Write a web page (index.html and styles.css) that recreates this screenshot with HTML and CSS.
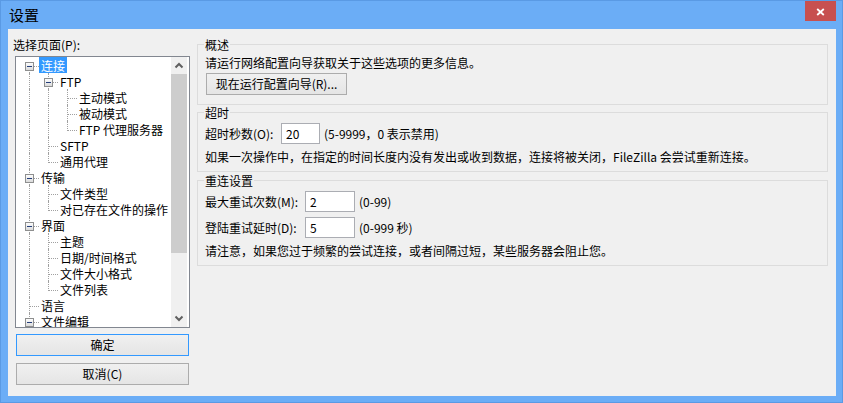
FILE: index.html
```html
<!DOCTYPE html>
<html lang="zh-CN">
<head>
    <meta charset="UTF-8">
    <meta name="viewport" content="width=device-width, initial-scale=1.0">
    <title>设置</title>
    <link rel="stylesheet" href="styles.css">
</head>
<body>
    <div class="window">
        <!-- 标题栏 -->
        <div class="titlebar">
            <span class="title">设置</span>
            <div class="close-btn">
                <svg width="9" height="8" viewBox="0 0 9 8"><path d="M1.2 1 L7.8 7 M7.8 1 L1.2 7" stroke="#fff" stroke-width="1.8" fill="none"/></svg>
            </div>
        </div>

        <div class="client">
            <!-- 左侧：页面树和按钮 -->
            <div class="sidebar">
                <div class="sidebar-label">选择页面(P):</div>
                <div class="tree">
                    <div class="tree-items">
                        <div class="tree-row"><span class="joint first"><span class="toggle"></span></span><span class="node-label selected">连接</span></div>
                        <div class="tree-row"><span class="indent line"></span><span class="joint tee"><span class="toggle"></span></span><span class="node-label">FTP</span></div>
                        <div class="tree-row"><span class="indent line"></span><span class="indent line"></span><span class="joint tee"></span><span class="node-label">主动模式</span></div>
                        <div class="tree-row"><span class="indent line"></span><span class="indent line"></span><span class="joint tee"></span><span class="node-label">被动模式</span></div>
                        <div class="tree-row"><span class="indent line"></span><span class="indent line"></span><span class="joint end"></span><span class="node-label">FTP 代理服务器</span></div>
                        <div class="tree-row"><span class="indent line"></span><span class="joint tee"></span><span class="node-label">SFTP</span></div>
                        <div class="tree-row"><span class="indent line"></span><span class="joint end"></span><span class="node-label">通用代理</span></div>
                        <div class="tree-row"><span class="joint tee"><span class="toggle"></span></span><span class="node-label">传输</span></div>
                        <div class="tree-row"><span class="indent line"></span><span class="joint tee"></span><span class="node-label">文件类型</span></div>
                        <div class="tree-row"><span class="indent line"></span><span class="joint end"></span><span class="node-label">对已存在文件的操作</span></div>
                        <div class="tree-row"><span class="joint tee"><span class="toggle"></span></span><span class="node-label">界面</span></div>
                        <div class="tree-row"><span class="indent line"></span><span class="joint tee"></span><span class="node-label">主题</span></div>
                        <div class="tree-row"><span class="indent line"></span><span class="joint tee"></span><span class="node-label">日期/时间格式</span></div>
                        <div class="tree-row"><span class="indent line"></span><span class="joint tee"></span><span class="node-label">文件大小格式</span></div>
                        <div class="tree-row"><span class="indent line"></span><span class="joint end"></span><span class="node-label">文件列表</span></div>
                        <div class="tree-row"><span class="joint tee"></span><span class="node-label">语言</span></div>
                        <div class="tree-row"><span class="joint tee"><span class="toggle"></span></span><span class="node-label">文件编辑</span></div>
                    </div>
                    <div class="scrollbar">
                        <div class="scroll-arrow">
                            <svg width="16" height="17" viewBox="0 0 16 17"><path d="M4.5 10.5 L8 7 L11.5 10.5" stroke="#606060" stroke-width="2" fill="none"/></svg>
                        </div>
                        <div class="scroll-track"><div class="scroll-thumb"></div></div>
                        <div class="scroll-arrow">
                            <svg width="16" height="17" viewBox="0 0 16 17"><path d="M4.5 6.5 L8 10 L11.5 6.5" stroke="#606060" stroke-width="2" fill="none"/></svg>
                        </div>
                    </div>
                </div>
                <button class="btn btn-side btn-default">确定</button>
                <button class="btn btn-side btn-cancel">取消(C)</button>
            </div>

            <!-- 右侧：连接设置 -->
            <div class="content">
                <div class="group group-overview">
                    <div class="group-title">概述</div>
                    <p class="group-text">请运行网络配置向导获取关于这些选项的更多信息。</p>
                    <button class="btn btn-wizard">现在运行配置向导(R)...</button>
                </div>

                <div class="group group-timeout">
                    <div class="group-title">超时</div>
                    <div class="field-row">
                        <span class="field-label label-short">超时秒数(O):</span>
                        <input type="text" class="field-input input-short" value="20">
                        <span class="field-hint">(5-9999，0 表示禁用)</span>
                    </div>
                    <p class="group-text">如果一次操作中，在指定的时间长度内没有发出或收到数据，连接将被关闭，FileZilla 会尝试重新连接。</p>
                </div>

                <div class="group group-reconnect">
                    <div class="group-title">重连设置</div>
                    <div class="field-row">
                        <span class="field-label label-long">最大重试次数(M):</span>
                        <input type="text" class="field-input input-long" value="2">
                        <span class="field-hint">(0-99)</span>
                    </div>
                    <div class="field-row">
                        <span class="field-label label-long">登陆重试延时(D):</span>
                        <input type="text" class="field-input input-long" value="5">
                        <span class="field-hint">(0-999 秒)</span>
                    </div>
                    <p class="group-text">请注意，如果您过于频繁的尝试连接，或者间隔过短，某些服务器会阻止您。</p>
                </div>
            </div>
        </div>
    </div>
</body>
</html>
```

FILE: styles.css
```css
body {
    margin: 0;
    font-family: "Noto Sans CJK SC", sans-serif;
    font-size: 12px;
    line-height: 16px;
    color: #000;
}
.window {
    width: 843px;
    height: 403px;
    box-sizing: border-box;
    border: 1px solid #5a9ae4;
    background-color: #6badf6; /* 窗口边框蓝色 */
    display: flex;
    flex-direction: column;
}
.titlebar {
    height: 28px;
    flex-shrink: 0;
    display: flex;
    align-items: center;
    padding-left: 8px;
}
.title {
    font-size: 15px;
    line-height: 20px;
}
.close-btn {
    margin-left: auto;
    margin-right: 6px;
    align-self: flex-start;
    width: 31px;
    height: 20px;
    background-color: #c75050; /* 关闭按钮红色 */
    display: flex;
    align-items: center;
    justify-content: center;
    padding-top: 1px;
    box-sizing: border-box;
}
.close-btn svg {
    display: block;
}
.client {
    flex: 1;
    margin: 0 6px 6px 7px;
    background-color: #f0f0f0;
    display: flex;
}

/* 左侧 */
.sidebar {
    width: 175px;
    padding: 8px 0 0 7px;
    display: flex;
    flex-direction: column;
}
.sidebar-label {
    margin-left: -2px;
}
.tree {
    margin-top: 3px;
    height: 272px;
    box-sizing: border-box;
    border: 1px solid #828790;
    background-color: #fff;
    display: flex;
}
.tree-items {
    flex: 1;
    padding-left: 4px;
    overflow: hidden;
}
.tree-row {
    height: 16px;
    display: flex;
    white-space: nowrap;
}
.indent, .joint {
    width: 19px;
    flex-shrink: 0;
    position: relative;
}
.indent.line::before, .joint::before {
    content: "";
    position: absolute;
    left: 9px;
    top: 0;
    bottom: 0;
    border-left: 1px dotted #a0a0a0;
}
.joint.first::before {
    top: 9px;
}
.joint.end::before {
    bottom: 6px;
}
.joint::after {
    content: "";
    position: absolute;
    left: 10px;
    right: 0;
    top: 9px;
    border-top: 1px dotted #a0a0a0;
}
.joint {
    display: flex;
    justify-content: center;
    align-items: flex-start;
    padding-top: 5px;
    box-sizing: border-box;
}
.toggle {
    position: relative;
    z-index: 1;
    width: 9px;
    height: 9px;
    box-sizing: border-box;
    border: 1px solid #8e8f8f;
    background: linear-gradient(#243e7a, #243e7a) center / 5px 1px no-repeat,
                linear-gradient(#fdfdfd, #dadada);
}
.node-label {
    height: 16px;
    padding: 0 2px;
    line-height: 18px; /* 文字下移一点，和原图对齐 */
}
.node-label.selected {
    background-color: #3399ff; /* 选中项蓝色 */
    color: #fff;
}
.scrollbar {
    width: 16px;
    margin-right: 2px;
    background-color: #f0f0f0;
    display: flex;
    flex-direction: column;
}
.scroll-arrow {
    height: 17px;
}
.scroll-arrow svg {
    display: block;
}
.scroll-track {
    flex: 1;
}
.scroll-thumb {
    height: 179px;
    background-color: #cdcdcd;
}

/* 按钮 */
.btn {
    font-family: inherit;
    font-size: 12px;
    line-height: 18px;
    color: #000;
    height: 22px;
    box-sizing: border-box;
    border: 1px solid #acacac;
    background: linear-gradient(#f0f0f0, #e5e5e5);
    padding: 0;
}
.btn-side {
    margin-left: 1px;
    width: 173px;
}
.btn-default {
    margin-top: 6px;
    border-color: #3399ff;
}
.btn-cancel {
    margin-top: 7px;
}
.btn-wizard {
    display: block;
    margin: 2px 0 0 1px;
    width: 141px;
}

/* 右侧 */
.content {
    flex: 1;
    margin: 15px 8px 0 7px;
}
.group {
    border: 1px solid #dcdcdc;
    padding: 0 7px 6px;
}
.group-overview {
    padding-bottom: 9px;
}
.group-timeout {
    margin-top: 7px;
}
.group-reconnect {
    margin-top: 8px;
}
.group-title {
    width: fit-content;
    margin: -8px 0 0 -1px;
    padding: 0 1px;
    background-color: #f0f0f0;
}
.group-text {
    margin: 5px 0 0;
}
.group-overview .group-text {
    margin-top: 2px;
}
.field-row {
    margin-top: 2px;
    height: 21px;
    display: flex;
    align-items: center;
}
.field-row + .field-row {
    margin-top: 5px;
}
.field-label {
    flex-shrink: 0;
}
.label-short {
    width: 76px;
}
.label-long {
    width: 100px;
}
.field-input {
    height: 21px;
    box-sizing: border-box;
    border: 1px solid #abadb3;
    background-color: #fff;
    padding: 0 4px;
    font-family: inherit;
    font-size: 12px;
    color: #000;
    margin: 0;
}
.input-short {
    width: 39px;
}
.input-long {
    width: 50px;
}
.field-hint {
    margin-left: 4px;
}
```
